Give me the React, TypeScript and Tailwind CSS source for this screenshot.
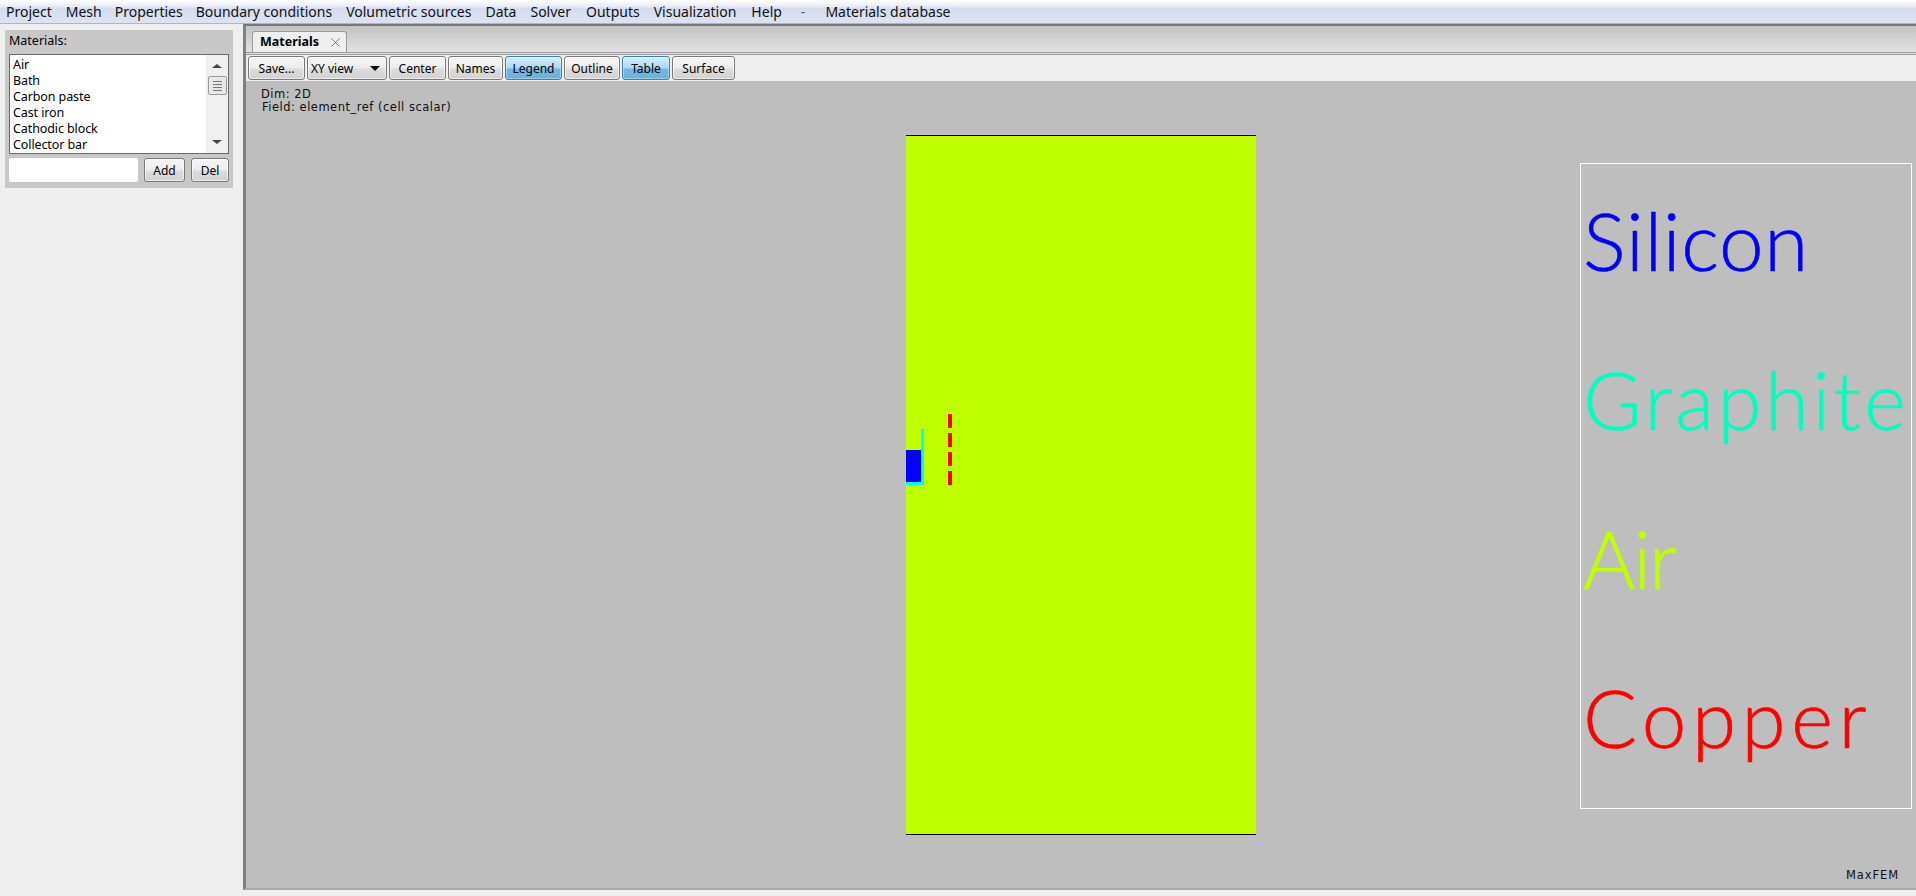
import { FC } from "react";
import { X } from "lucide-react";

const menuItems = [
  { label: "Project", className: "" },
  { label: "Mesh", className: "" },
  { label: "Properties", className: "-ml-[1px]" },
  { label: "Boundary conditions", className: "-ml-[1px]" },
  { label: "Volumetric sources", className: "" },
  { label: "Data", className: "" },
  { label: "Solver", className: "" },
  { label: "Outputs", className: "ml-[1px]" },
  { label: "Visualization", className: "" },
  { label: "Help", className: "ml-[1px]" },
  { label: "-", className: "ml-[5px] text-[#555]" },
  { label: "Materials database", className: "ml-[6px]" },
];

const materials = ["Air", "Bath", "Carbon paste", "Cast iron", "Cathodic block", "Collector bar"];

const Btn: FC<{ label: string; className: string; active?: boolean }> = ({ label, className, active }) => (
  <button
    className={
      active
        ? `h-[24px] shrink-0 rounded-[3px] border border-[#3c7fb1] bg-[linear-gradient(#d7eefa_0%,#a9daf5_50%,#6fb8e2_55%,#68b3de_100%)] pt-[1px] text-[12px] leading-none text-black shadow-[inset_0_0_0_1px_rgba(255,255,255,0.35)] ${className}`
        : `h-[24px] shrink-0 rounded-[3px] border border-[#7a7a7a] bg-[linear-gradient(#f6f6f6_0%,#ececec_50%,#dcdcdc_55%,#d2d2d2_100%)] pt-[1px] text-[12px] leading-none text-black shadow-[inset_0_0_0_1px_rgba(255,255,255,0.6)] ${className}`
    }
  >
    {label}
  </button>
);

const Toolbar = () => (
  <div className="flex h-[26px] shrink-0 items-start gap-[2px] bg-[#efefef] pt-[1px] pl-[2px]">
    <Btn label="Save..." className="w-[57px]" />
    <button className="flex h-[24px] w-[80px] shrink-0 items-center justify-between rounded-[3px] border border-[#7a7a7a] bg-[linear-gradient(#f6f6f6_0%,#ececec_50%,#dcdcdc_55%,#d2d2d2_100%)] pt-[1px] pr-[6px] pl-[3px] text-[12px] leading-none text-black shadow-[inset_0_0_0_1px_rgba(255,255,255,0.6)]">
      XY view
      <span className="h-0 w-0 border-x-[5px] border-t-[5px] border-x-transparent border-t-black" />
    </button>
    <Btn label="Center" className="w-[57px]" />
    <Btn label="Names" className="w-[55px]" />
    <Btn label="Legend" className="w-[57px]" active />
    <Btn label="Outline" className="w-[56px]" />
    <Btn label="Table" className="w-[48px]" active />
    <Btn label="Surface" className="w-[63px]" />
  </div>
);

const legend = [
  { name: "Silicon", color: "text-[#0000ff] tracking-[0.7px]" },
  { name: "Graphite", color: "text-[#00ffbf] tracking-[3.4px]" },
  { name: "Air", color: "text-[#bfff00] -tracking-[2px]" },
  { name: "Copper", color: "text-[#ff0000] tracking-[5.5px]" },
];

// the render window is a free canvas, so its contents sit at their own coordinates
const Canvas = () => (
  <div className="relative flex-1 overflow-hidden bg-[#bebebe] font-['DejaVu_Sans',sans-serif]">
    <div className="absolute top-[7px] left-[15px] text-[11.5px] leading-[13px] tracking-[0.5px] text-[#111]">
      <div>Dim: 2D</div>
      <div className="pl-[1px]">Field: element_ref (cell scalar)</div>
    </div>

    <div className="absolute top-[54px] left-[660px] h-[700px] w-[350px] border-y border-black bg-[#bfff00]">
      <div className="absolute top-[293px] left-[15px] h-[56px] w-[3px] bg-[#00ffff]" />
      <div className="absolute top-[346px] left-0 h-[3px] w-[15px] bg-[#00ffff]" />
      <div className="absolute top-[314px] left-0 h-[32px] w-[15px] bg-[#0000ff]" />
      <div className="absolute top-[278px] left-[42px] flex flex-col gap-[5px]">
        <span className="h-[14px] w-[4px] bg-[#ff0000]" />
        <span className="h-[14px] w-[4px] bg-[#ff0000]" />
        <span className="h-[14px] w-[4px] bg-[#ff0000]" />
        <span className="h-[14px] w-[4px] bg-[#ff0000]" />
      </div>
    </div>

    <div className="absolute top-[82px] left-[1334px] flex h-[646px] w-[332px] flex-col border border-white pt-[26px] pl-[2px] font-['Lato',sans-serif] font-light">
      {legend.map((l) => (
        <div key={l.name} className={`h-[159px] shrink-0 text-[80px] leading-[100px] [-webkit-text-stroke:0.6px_currentColor] ${l.color}`}>
          {l.name}
        </div>
      ))}
    </div>

    <div className="absolute right-[17px] bottom-[6px] text-[11.5px] leading-[13px] tracking-[0.9px] text-[#111]">MaxFEM</div>
  </div>
);

const Sidebar = () => (
  <div className="w-[243px] shrink-0 pt-[6px] pl-[5px]">
    <div className="h-[158px] w-[228px] bg-[#c8c8c8] px-[4px]">
      <div className="h-[24px] pt-[3px] text-[12.5px] leading-[16px] text-black">Materials:</div>
      <div className="flex h-[100px] w-[220px] border border-[#6a6a6a] bg-white">
        <div className="flex-1 pt-[2px] pl-[3px]">
          {materials.map((m) => (
            <div key={m} className="h-[16px] text-[12.5px] leading-[15px] -tracking-[0.1px] text-black">
              {m}
            </div>
          ))}
        </div>
        <div className="flex w-[22px] flex-col items-center bg-[#f0f0f0]">
          <span className="mt-[9px] h-0 w-0 border-x-[5px] border-b-[4px] border-x-transparent border-b-[#444]" />
          <div className="mt-[8px] flex h-[19px] w-[19px] flex-col items-center justify-center gap-[2px] rounded-[2px] border border-[#9a9a9a] bg-[#e8e8e8]">
            <span className="h-px w-[9px] bg-[#777]" />
            <span className="h-px w-[9px] bg-[#777]" />
            <span className="h-px w-[9px] bg-[#777]" />
            <span className="h-px w-[9px] bg-[#777]" />
          </div>
          <span className="mt-auto mb-[9px] h-0 w-0 border-x-[5px] border-t-[4px] border-x-transparent border-t-[#444]" />
        </div>
      </div>
      <div className="mt-[4px] flex items-start">
        <input className="h-[24px] w-[129px] rounded-[2px] bg-white" />
        <Btn label="Add" className="ml-[6px] w-[41px]" />
        <Btn label="Del" className="ml-[6px] w-[38px]" />
      </div>
    </div>
  </div>
);

export default function App() {
  return (
    <div className="flex h-[896px] w-[1916px] flex-col overflow-hidden bg-[#efefef] font-['Noto_Sans',sans-serif]">
      <div className="flex h-[24px] shrink-0 items-center gap-[14px] border-b border-[#b0b4c0] bg-[linear-gradient(#ffffff_0%,#e6eaf6_30%,#d5dcef_35%,#dde3f3_100%)] pl-[6px] text-[14px] text-[#111]">
        {menuItems.map((item) => (
          <span key={item.label} className={item.className}>
            {item.label}
          </span>
        ))}
      </div>
      <div className="flex h-[866px] shrink-0">
        <Sidebar />
        <div className="flex flex-1 flex-col border-t-2 border-b-2 border-l-[3px] border-t-[#777] border-b-[#aaa] border-l-[#808080]">
          <div className="flex h-[27px] shrink-0 items-end border-b border-[#999] bg-[linear-gradient(#c2c2c2,#e2e2e2)] pl-[6px]">
            <div className="flex h-[21px] w-[95px] items-center gap-[9px] rounded-t-[3px] border border-b-0 border-[#999] bg-[#efefef] pl-[7px] text-[12.5px] font-bold text-black">
              Materials
              <X size={15} strokeWidth={1.2} className="text-[#555]" />
            </div>
          </div>
          <div className="h-[2px] shrink-0 border-b border-[#999] bg-[#e2e2e2]" />
          <Toolbar />
          <Canvas />
        </div>
      </div>
    </div>
  );
}
